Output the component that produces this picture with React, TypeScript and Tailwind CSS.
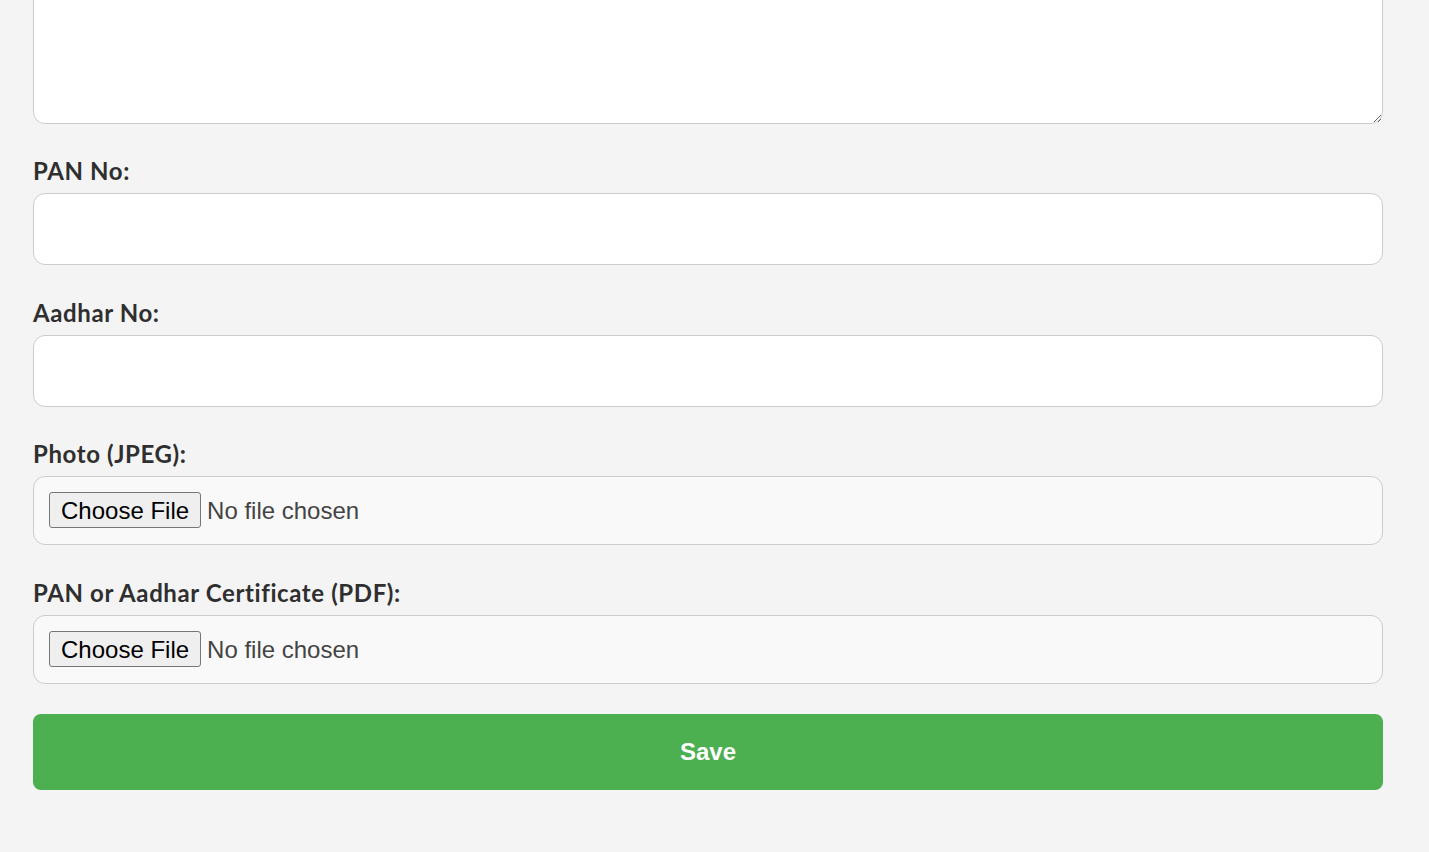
export default function App() {
  const label =
    "mb-[8px] block font-['Lato',sans-serif] text-[24px] font-bold leading-[29px] tracking-[0.6px] text-[#2f2f2f]"
  const textInput =
    "block h-[72px] w-full rounded-xl border border-[#ccc] bg-white px-[15px] font-['Liberation_Sans',Arial,sans-serif] text-[24px] outline-none"
  const fileInput =
    "block w-full rounded-xl border border-[#ccc] bg-[#f9f9f9] p-[15px] font-['Liberation_Sans',Arial,sans-serif] text-[24px] leading-normal text-[#444] file:mr-[6px] file:h-[36px] file:rounded-[3px] file:border file:border-solid file:border-[#767676] file:bg-[#efefef] file:px-[11px] file:text-[24px] file:text-black"

  return (
    <div className="min-h-[852px] overflow-hidden bg-[#f4f4f4]">
      <form className="-mt-[76px] ml-[33px] w-[1350px] pb-[62px]" onSubmit={(e) => e.preventDefault()}>
        <textarea className="block h-[200px] w-full rounded-xl border border-[#ccc] bg-white p-[15px] font-['Liberation_Sans',Arial,sans-serif] text-[24px] outline-none" />

        <div className="mt-[32px]">
          <label className={label}>PAN No:</label>
          <input type="text" className={textInput} />
        </div>

        <div className="mt-[33px]">
          <label className={label}>Aadhar No:</label>
          <input type="text" className={textInput} />
        </div>

        <div className="mt-[32px]">
          <label className={label}>Photo (JPEG):</label>
          <input type="file" accept="image/jpeg" className={fileInput} />
        </div>

        <div className="mt-[33px]">
          <label className={label}>PAN or Aadhar Certificate (PDF):</label>
          <input type="file" accept="application/pdf" className={fileInput} />
        </div>

        <button
          type="submit"
          className="mt-[30px] block h-[76px] w-full rounded-[8px] bg-[#4caf50] font-['Liberation_Sans',Arial,sans-serif] text-[24px] font-bold text-white"
        >
          Save
        </button>
      </form>
    </div>
  )
}
